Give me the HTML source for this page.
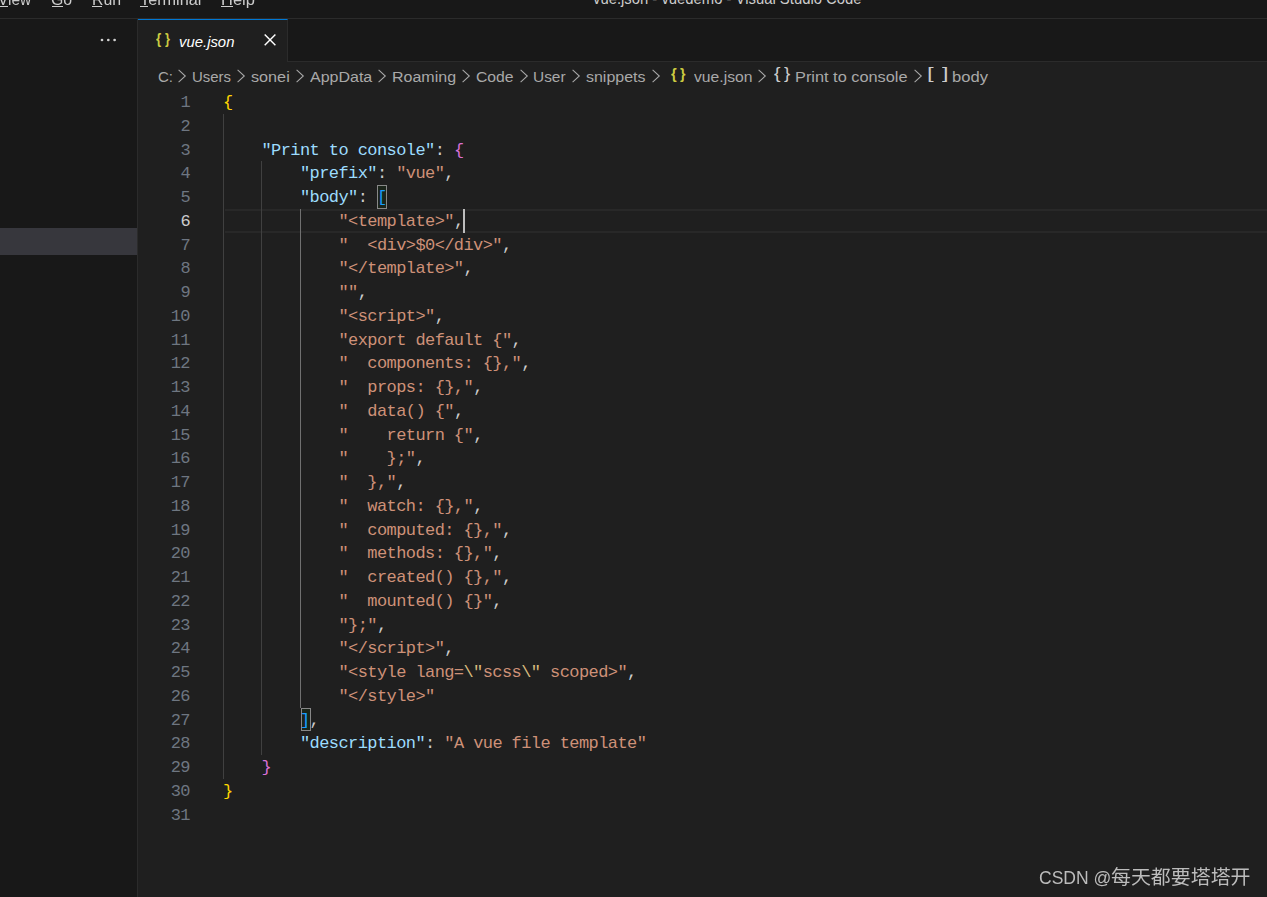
<!DOCTYPE html>
<html lang="en">
<head>
<meta charset="utf-8">
<title>vue.json - vuedemo - Visual Studio Code</title>
<style>
*{box-sizing:border-box;margin:0;padding:0}
html,body{width:1267px;height:897px;overflow:hidden;background:#1f1f1f}
body{position:relative;font-family:'Liberation Sans','Noto Sans CJK SC',sans-serif;color:#ccc}
i{font-style:normal;display:block}b{font-weight:normal}
.t{position:absolute;white-space:pre;transform-origin:0 0}
.titlebar{position:absolute;left:0;top:0;width:1267px;height:19px;background:#181818;border-bottom:1px solid #2b2b2b;overflow:hidden}
.ul{position:absolute;top:6px;height:1px;background:#ccc}
.menubar{position:absolute;left:0;top:0;width:300px;height:18px;overflow:hidden;will-change:transform}
.wm{position:absolute;left:0;top:850px;width:1267px;height:47px;will-change:transform}
.sidebar{position:absolute;left:0;top:19px;width:138px;height:878px;background:#181818;border-right:1px solid #2b2b2b}
.sel{position:absolute;left:0;top:209px;width:137px;height:27px;background:#37373d}
.tabbar{position:absolute;left:138px;top:19px;width:1129px;height:43px;background:#181818;border-bottom:1px solid #2b2b2b}
.tab{position:absolute;left:0;top:0;width:150px;height:43px;background:#1f1f1f;border-top:1px solid #0078d4;border-right:1px solid #2b2b2b}
.x{position:absolute;overflow:visible}
.bc{position:absolute;left:138px;top:62px;width:1129px;height:28px;background:#1f1f1f}
.editor{position:absolute;left:0;top:0;width:1267px;height:897px;font:17px/24px 'Liberation Mono',monospace;letter-spacing:-0.582px}
.ln{position:absolute;left:138px;width:52.0px;text-align:right;color:#6e7681;white-space:pre}
.ln.cur{color:#cccccc}
.cl{position:absolute;left:223.0px;white-space:pre;color:#cccccc}
.k{color:#9cdcfe}.s{color:#ce9178}.e{color:#d7ba7d}
.b1{color:#ffd700}.b2{color:#da70d6}.b3{color:#179fff}
.bm{position:absolute;width:10px;height:24px;border:1px solid #888;background:rgba(0,100,0,0.1)}
.g{position:absolute;width:1px;background:#404040}
.g.ga{background:#707070}
.curline{position:absolute;left:225px;width:1042px;border-top:2px solid #282828;border-bottom:2px solid #282828}
.cursor{position:absolute;left:463px;top:209px;width:2px;height:24px;background:#bdbdbd}
</style>
</head>
<body>
<div class="titlebar">
<span class="t" style="left:592.70px;top:-11px;font:16px/20px 'Liberation Sans',sans-serif;color:#cccccc;transform:scaleX(0.9270);">vue.json - vuedemo - Visual Studio Code</span>
</div>
<div class="sidebar"><div class="sel"></div></div>
<svg class="x" width="20" height="6" viewBox="0 0 20 6" style="left:99px;top:37px"><circle cx="3" cy="3" r="1.35" fill="#d0d0d0"/><circle cx="9.3" cy="3" r="1.35" fill="#d0d0d0"/><circle cx="15.6" cy="3" r="1.35" fill="#d0d0d0"/></svg>
<div class="tabbar"><div class="tab"></div></div>
<span class="t" style="left:156.08px;top:28px;font:bold 15.0px/21px 'Liberation Sans',sans-serif;color:#cbcb41;transform:scaleX(0.8952)">{</span>
<span class="t" style="left:164.79px;top:28px;font:bold 15.0px/21px 'Liberation Sans',sans-serif;color:#cbcb41;transform:scaleX(0.8545)">}</span>
<span class="t" style="left:178.88px;top:32px;font:italic 15.5px/20px 'Liberation Sans',sans-serif;color:#ffffff;transform:scaleX(0.9600);">vue.json</span>
<svg class="x" width="14" height="14" viewBox="0 0 14 14" style="left:262.5px;top:33px"><path d="M1.7 1.6 L12.4 12.3 M12.4 1.6 L1.7 12.3" stroke="#fff" stroke-width="1.45" fill="none"/></svg>
<div class="bc"></div>
<span class="t" style="left:158.37px;top:67px;font:15.5px/20px 'Liberation Sans',sans-serif;color:#a9a9a9;transform:scaleX(0.9704);">C:</span>
<span class="t" style="left:191.89px;top:67px;font:15.5px/20px 'Liberation Sans',sans-serif;color:#a9a9a9;transform:scaleX(0.9652);">Users</span>
<span class="t" style="left:250.98px;top:67px;font:15.5px/20px 'Liberation Sans',sans-serif;color:#a9a9a9;transform:scaleX(1.0451);">sonei</span>
<span class="t" style="left:309.50px;top:67px;font:15.5px/20px 'Liberation Sans',sans-serif;color:#a9a9a9;transform:scaleX(1.0324);">AppData</span>
<span class="t" style="left:392.21px;top:67px;font:15.5px/20px 'Liberation Sans',sans-serif;color:#a9a9a9;transform:scaleX(1.0326);">Roaming</span>
<span class="t" style="left:475.74px;top:67px;font:15.5px/20px 'Liberation Sans',sans-serif;color:#a9a9a9;transform:scaleX(1.0154);">Code</span>
<span class="t" style="left:533.26px;top:67px;font:15.5px/20px 'Liberation Sans',sans-serif;color:#a9a9a9;transform:scaleX(0.9952);">User</span>
<span class="t" style="left:586.38px;top:67px;font:15.5px/20px 'Liberation Sans',sans-serif;color:#a9a9a9;transform:scaleX(1.0308);">snippets</span>
<span class="t" style="left:693.70px;top:67px;font:15.5px/20px 'Liberation Sans',sans-serif;color:#a9a9a9;transform:scaleX(1.0132);">vue.json</span>
<span class="t" style="left:795.48px;top:67px;font:15.5px/20px 'Liberation Sans',sans-serif;color:#a9a9a9;transform:scaleX(1.0533);">Print to console</span>
<span class="t" style="left:952.33px;top:67px;font:15.5px/20px 'Liberation Sans',sans-serif;color:#a9a9a9;transform:scaleX(1.0708);">body</span>
<svg class="x" width="10" height="14" viewBox="0 0 10 14" style="left:178.3px;top:69px"><path d="M0.6 0.9 L7.3 7 L0.6 13.1" stroke="#a9a9a9" stroke-width="1.05" fill="none"/></svg>
<svg class="x" width="10" height="14" viewBox="0 0 10 14" style="left:236.8px;top:69px"><path d="M0.6 0.9 L7.3 7 L0.6 13.1" stroke="#a9a9a9" stroke-width="1.05" fill="none"/></svg>
<svg class="x" width="10" height="14" viewBox="0 0 10 14" style="left:295.7px;top:69px"><path d="M0.6 0.9 L7.3 7 L0.6 13.1" stroke="#a9a9a9" stroke-width="1.05" fill="none"/></svg>
<svg class="x" width="10" height="14" viewBox="0 0 10 14" style="left:378.2px;top:69px"><path d="M0.6 0.9 L7.3 7 L0.6 13.1" stroke="#a9a9a9" stroke-width="1.05" fill="none"/></svg>
<svg class="x" width="10" height="14" viewBox="0 0 10 14" style="left:462.4px;top:69px"><path d="M0.6 0.9 L7.3 7 L0.6 13.1" stroke="#a9a9a9" stroke-width="1.05" fill="none"/></svg>
<svg class="x" width="10" height="14" viewBox="0 0 10 14" style="left:520.1px;top:69px"><path d="M0.6 0.9 L7.3 7 L0.6 13.1" stroke="#a9a9a9" stroke-width="1.05" fill="none"/></svg>
<svg class="x" width="10" height="14" viewBox="0 0 10 14" style="left:572.3px;top:69px"><path d="M0.6 0.9 L7.3 7 L0.6 13.1" stroke="#a9a9a9" stroke-width="1.05" fill="none"/></svg>
<svg class="x" width="10" height="14" viewBox="0 0 10 14" style="left:651.9px;top:69px"><path d="M0.6 0.9 L7.3 7 L0.6 13.1" stroke="#a9a9a9" stroke-width="1.05" fill="none"/></svg>
<svg class="x" width="10" height="14" viewBox="0 0 10 14" style="left:758.4px;top:69px"><path d="M0.6 0.9 L7.3 7 L0.6 13.1" stroke="#a9a9a9" stroke-width="1.05" fill="none"/></svg>
<svg class="x" width="10" height="14" viewBox="0 0 10 14" style="left:914.2px;top:69px"><path d="M0.6 0.9 L7.3 7 L0.6 13.1" stroke="#a9a9a9" stroke-width="1.05" fill="none"/></svg>
<span class="t" style="left:670.76px;top:63px;font:bold 15.5px/22px 'Liberation Sans',sans-serif;color:#cbcb41;transform:scaleX(0.9455)">{</span>
<span class="t" style="left:679.67px;top:63px;font:bold 15.5px/22px 'Liberation Sans',sans-serif;color:#cbcb41;transform:scaleX(0.9091)">}</span>
<span class="t" style="left:773.71px;top:62px;font:normal 17.0px/23px 'Liberation Sans',sans-serif;color:#cccccc;transform:scaleX(1.1429)">{</span>
<span class="t" style="left:783.82px;top:62px;font:normal 17.0px/23px 'Liberation Sans',sans-serif;color:#cccccc;transform:scaleX(1.1048)">}</span>
<span class="t" style="left:927.25px;top:62px;font:normal 17.0px/23px 'Liberation Sans',sans-serif;color:#cccccc;transform:scaleX(1.4000)">[</span>
<span class="t" style="left:942.10px;top:62px;font:normal 17.0px/23px 'Liberation Sans',sans-serif;color:#cccccc;transform:scaleX(1.3714)">]</span>
<div class="editor">
<i class="curline" style="top:209px;height:24px"></i>
<i class="g " style="left:223px;top:114px;height:665px"></i>
<i class="g " style="left:261px;top:161px;height:594px"></i>
<i class="g ga" style="left:300px;top:209px;height:499px"></i>
<i class="bm" style="left:377px;top:185px"></i>
<i class="bm" style="left:301px;top:708px;height:23px"></i>
<span class="ln" style="top:91px">1</span>
<span class="cl" style="top:91px"><b class="b1">{</b></span>
<span class="ln" style="top:115px">2</span>
<span class="ln" style="top:139px">3</span>
<span class="cl" style="top:139px">    <b class="k">"Print to console"</b>: <b class="b2">{</b></span>
<span class="ln" style="top:162px">4</span>
<span class="cl" style="top:162px">        <b class="k">"prefix"</b>: <b class="s">"vue"</b>,</span>
<span class="ln" style="top:186px">5</span>
<span class="cl" style="top:186px">        <b class="k">"body"</b>: <b class="b3">[</b></span>
<span class="ln cur" style="top:210px">6</span>
<span class="cl" style="top:210px">            <b class="s">"&lt;template&gt;"</b>,</span>
<span class="ln" style="top:234px">7</span>
<span class="cl" style="top:234px">            <b class="s">"  &lt;div&gt;$0&lt;/div&gt;"</b>,</span>
<span class="ln" style="top:257px">8</span>
<span class="cl" style="top:257px">            <b class="s">"&lt;/template&gt;"</b>,</span>
<span class="ln" style="top:281px">9</span>
<span class="cl" style="top:281px">            <b class="s">""</b>,</span>
<span class="ln" style="top:305px">10</span>
<span class="cl" style="top:305px">            <b class="s">"&lt;script&gt;"</b>,</span>
<span class="ln" style="top:329px">11</span>
<span class="cl" style="top:329px">            <b class="s">"export default {"</b>,</span>
<span class="ln" style="top:352px">12</span>
<span class="cl" style="top:352px">            <b class="s">"  components: {},"</b>,</span>
<span class="ln" style="top:376px">13</span>
<span class="cl" style="top:376px">            <b class="s">"  props: {},"</b>,</span>
<span class="ln" style="top:400px">14</span>
<span class="cl" style="top:400px">            <b class="s">"  data() {"</b>,</span>
<span class="ln" style="top:424px">15</span>
<span class="cl" style="top:424px">            <b class="s">"    return {"</b>,</span>
<span class="ln" style="top:447px">16</span>
<span class="cl" style="top:447px">            <b class="s">"    };"</b>,</span>
<span class="ln" style="top:471px">17</span>
<span class="cl" style="top:471px">            <b class="s">"  },"</b>,</span>
<span class="ln" style="top:495px">18</span>
<span class="cl" style="top:495px">            <b class="s">"  watch: {},"</b>,</span>
<span class="ln" style="top:519px">19</span>
<span class="cl" style="top:519px">            <b class="s">"  computed: {},"</b>,</span>
<span class="ln" style="top:542px">20</span>
<span class="cl" style="top:542px">            <b class="s">"  methods: {},"</b>,</span>
<span class="ln" style="top:566px">21</span>
<span class="cl" style="top:566px">            <b class="s">"  created() {},"</b>,</span>
<span class="ln" style="top:590px">22</span>
<span class="cl" style="top:590px">            <b class="s">"  mounted() {}"</b>,</span>
<span class="ln" style="top:614px">23</span>
<span class="cl" style="top:614px">            <b class="s">"};"</b>,</span>
<span class="ln" style="top:637px">24</span>
<span class="cl" style="top:637px">            <b class="s">"&lt;/script&gt;"</b>,</span>
<span class="ln" style="top:661px">25</span>
<span class="cl" style="top:661px">            <b class="s">"&lt;style lang=<b class="e">\"</b>scss<b class="e">\"</b> scoped&gt;"</b>,</span>
<span class="ln" style="top:685px">26</span>
<span class="cl" style="top:685px">            <b class="s">"&lt;/style&gt;"</b></span>
<span class="ln" style="top:709px">27</span>
<span class="cl" style="top:709px">        <b class="b3">]</b>,</span>
<span class="ln" style="top:732px">28</span>
<span class="cl" style="top:732px">        <b class="k">"description"</b>: <b class="s">"A vue file template"</b></span>
<span class="ln" style="top:756px">29</span>
<span class="cl" style="top:756px">    <b class="b2">}</b></span>
<span class="ln" style="top:780px">30</span>
<span class="cl" style="top:780px"><b class="b1">}</b></span>
<span class="ln" style="top:804px">31</span>
<i class="cursor"></i>
</div>
<div class="menubar">
<span class="t" style="left:-1.79px;top:-10px;font:16px/20px 'Liberation Sans',sans-serif;color:#cccccc;transform:scaleX(0.9650);">View</span>
<i class="ul" style="left:-3px;width:11px"></i>
<span class="t" style="left:51.36px;top:-10px;font:16px/20px 'Liberation Sans',sans-serif;color:#cccccc;transform:scaleX(0.9900);">Go</span>
<i class="ul" style="left:52px;width:11px"></i>
<span class="t" style="left:92.16px;top:-10px;font:16px/20px 'Liberation Sans',sans-serif;color:#cccccc;transform:scaleX(0.9926);">Run</span>
<i class="ul" style="left:92px;width:10px"></i>
<span class="t" style="left:140.05px;top:-10px;font:16px/20px 'Liberation Sans',sans-serif;color:#cccccc;transform:scaleX(1.0160);">Terminal</span>
<i class="ul" style="left:140px;width:8px"></i>
<span class="t" style="left:221.01px;top:-10px;font:16px/20px 'Liberation Sans',sans-serif;color:#cccccc;transform:scaleX(1.0290);">Help</span>
<i class="ul" style="left:221px;width:12px"></i>
</div>
<div class="wm">
<span class="t" style="left:1039.17px;top:16px;font:18px/24px 'Liberation Sans',sans-serif;color:#bcbcbc;transform:scaleX(0.9736);">CSDN @</span>
<span class="t" style="left:1110.53px;top:14px;font:19.5px/26px 'Liberation Sans','Noto Sans CJK SC',sans-serif;color:#bcbcbc;transform:scaleX(1.0219);">每天都要塔塔开</span>
</div>
</body>
</html>
